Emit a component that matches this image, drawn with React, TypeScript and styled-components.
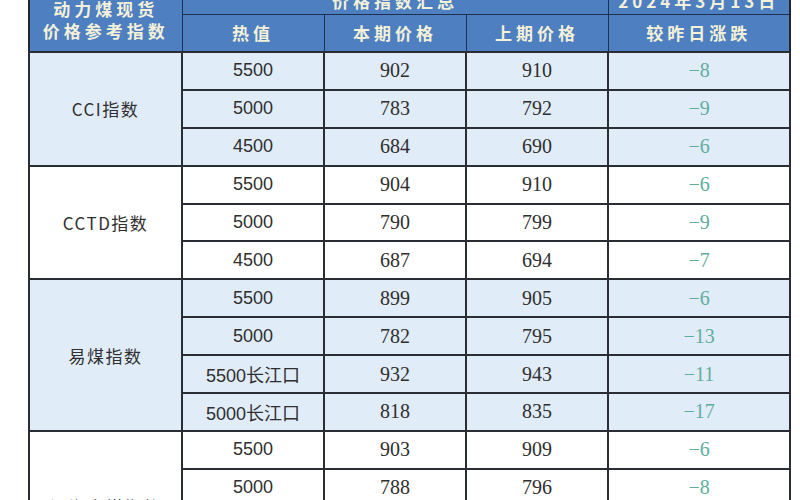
import styled, { createGlobalStyle } from "styled-components";

const GlobalStyle = createGlobalStyle`
  html, body {
    margin: 0;
    padding: 0;
    background: #fff;
  }
  body {
    font-family: "Liberation Serif", "Noto Sans CJK SC", serif;
    overflow: hidden;
  }
`;

type Row = { heat: string; now: number; prev: number };
type Group = { name: string; tint: boolean; rows: Row[] };

const groups: Group[] = [
  {
    name: "CCI指数",
    tint: true,
    rows: [
      { heat: "5500", now: 902, prev: 910 },
      { heat: "5000", now: 783, prev: 792 },
      { heat: "4500", now: 684, prev: 690 },
    ],
  },
  {
    name: "CCTD指数",
    tint: false,
    rows: [
      { heat: "5500", now: 904, prev: 910 },
      { heat: "5000", now: 790, prev: 799 },
      { heat: "4500", now: 687, prev: 694 },
    ],
  },
  {
    name: "易煤指数",
    tint: true,
    rows: [
      { heat: "5500", now: 899, prev: 905 },
      { heat: "5000", now: 782, prev: 795 },
      { heat: "5500长江口", now: 932, prev: 943 },
      { heat: "5000长江口", now: 818, prev: 835 },
    ],
  },
  {
    name: "沿海电煤指数",
    tint: false,
    rows: [
      { heat: "5500", now: 903, prev: 909 },
      { heat: "5000", now: 788, prev: 796 },
      { heat: "4500", now: 690, prev: 695 },
      { heat: "5500长江口", now: 930, prev: 938 },
    ],
  },
];

function App() {
  return (
    <>
      <GlobalStyle />
      <Page>
        <Table>
          <colgroup>
            <col style={{ width: 153 }} />
            <col style={{ width: 142 }} />
            <col style={{ width: 142 }} />
            <col style={{ width: 142 }} />
            <col style={{ width: 182 }} />
          </colgroup>
          <thead>
            <TitleRow>
              <HeadCell rowSpan={2}>
                动力煤现货
                <br />
                价格参考指数
              </HeadCell>
              <HeadCell colSpan={3}>价格指数汇总</HeadCell>
              <HeadCell>2024年3月13日</HeadCell>
            </TitleRow>
            <LabelRow>
              <HeadCell>热值</HeadCell>
              <HeadCell>本期价格</HeadCell>
              <HeadCell>上期价格</HeadCell>
              <HeadCell>较昨日涨跌</HeadCell>
            </LabelRow>
          </thead>
          <tbody>
            {groups.map((g) =>
              g.rows.map((r, i) => (
                <BodyRow key={g.name + i} $tint={g.tint}>
                  {i === 0 && <NameCell rowSpan={g.rows.length}>{g.name}</NameCell>}
                  <HeatCell>{r.heat}</HeatCell>
                  <PriceCell>{r.now}</PriceCell>
                  <PriceCell>{r.prev}</PriceCell>
                  <ChangeCell>−{r.prev - r.now}</ChangeCell>
                </BodyRow>
              ))
            )}
          </tbody>
        </Table>
      </Page>
    </>
  );
}

export default App;

const Page = styled.div`
  width: 800px;
  height: 500px;
  overflow: hidden;
  padding-left: 28px;
  box-sizing: border-box;
`;

const Table = styled.table`
  width: 762px;
  table-layout: fixed;
  border-collapse: collapse;
  margin-top: -11px;
  border-left: 2px solid #22262e;
  border-right: 2px solid #22262e;
`;

const TitleRow = styled.tr`
  height: 25px;
`;

const LabelRow = styled.tr`
  height: 38px;
`;

const HeadCell = styled.th`
  background: #4d7fc1;
  color: #f5f1d8;
  font-family: "Noto Sans CJK SC", sans-serif;
  font-weight: 700;
  font-size: 17px;
  letter-spacing: 4px;
  line-height: 22px;
  text-align: center;
  padding: 0;
  border: 1.5px solid #1d3150;
  border-top: none;
`;

const BodyRow = styled.tr<{ $tint: boolean }>`
  height: 37.9px;
  background: ${(p) => (p.$tint ? "#e1ecf9" : "#ffffff")};
  td {
    border: 2px solid #2a2d33;
    padding: 0;
    text-align: center;
    color: #2f2f2f;
  }
`;

const NameCell = styled.td`
  font-family: "Noto Sans CJK SC", sans-serif;
  font-size: 17px;
  letter-spacing: 1.5px;
`;

const HeatCell = styled.td`
  font-family: "Liberation Sans", "Noto Sans CJK SC", sans-serif;
  font-size: 18px;
`;

const PriceCell = styled.td`
  font-family: "Liberation Serif", serif;
  font-size: 20px;
`;

const ChangeCell = styled.td`
  font-family: "Liberation Serif", serif;
  font-size: 20px;
  && {
    color: #5fae9d;
  }
`;
